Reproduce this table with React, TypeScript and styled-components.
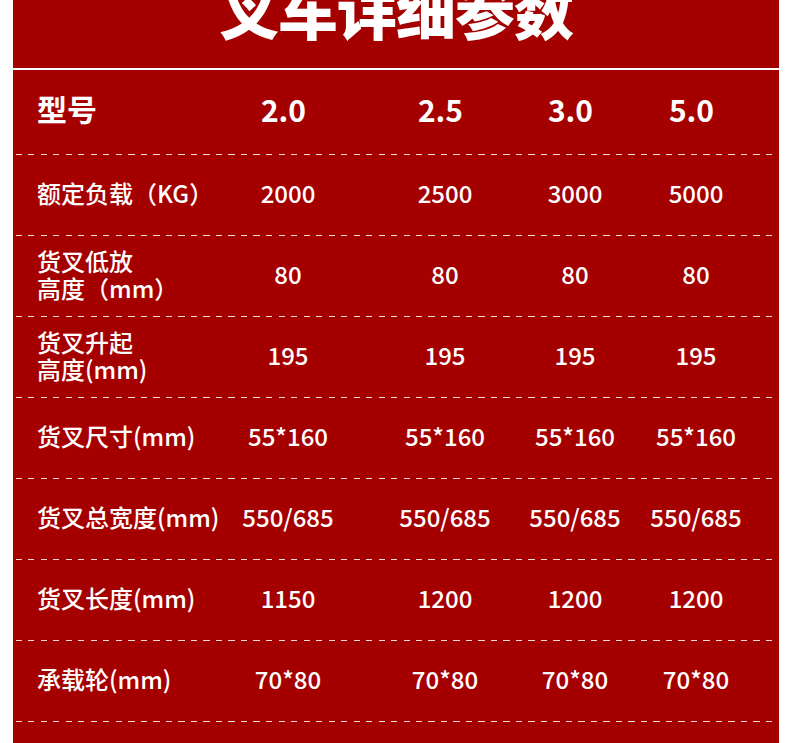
import React, { FC } from 'react';
import styled, { createGlobalStyle } from 'styled-components';

const RED = '#a50000';
const FONT = `"Noto Sans CJK SC", "Noto Sans", sans-serif`;

const GlobalStyle = createGlobalStyle`
  html, body {
    margin: 0;
    padding: 0;
    background: #ffffff;
  }

  body {
    font-family: ${FONT};
    color: #ffffff;
  }
`;

const Panel = styled.section`
  width: 766px;
  height: 743px;
  margin: 0 11px 0 13px;
  background: ${RED};
  overflow: hidden;
`;

const TitleBar = styled.header`
  height: 70px;
  display: flex;
  align-items: flex-end;
  justify-content: center;
  padding-bottom: 29px;
  box-sizing: border-box;
  border-bottom: 2px solid #ffffff;
`;

const Title = styled.h1`
  margin: 0;
  font-size: 60px;
  line-height: 60px;
  font-weight: 900;
  letter-spacing: -1px;
  white-space: nowrap;
`;

const Table = styled.div`
  display: flex;
  flex-direction: column;
`;

const Row = styled.div<{ $head?: boolean }>`
  display: grid;
  grid-template-columns: 173px 156px 158px 102px 140px;
  align-items: center;
  box-sizing: border-box;
  height: ${({ $head }) => ($head ? '84px' : '80px')};
  padding: 0 0 ${({ $head }) => ($head ? '7px' : '5px')} 24px;
  font-size: ${({ $head }) => ($head ? '30px' : '24px')};
  font-weight: ${({ $head }) => ($head ? 700 : 500)};
`;

const Dash = styled.div`
  height: 1px;
  margin: 0 3px;
  background: repeating-linear-gradient(
    to right,
    rgba(255, 255, 255, 0.85) 0 6px,
    transparent 6px 12.5px
  );
`;

const Label = styled.div`
  white-space: nowrap;
  line-height: 27px;
`;

const Value = styled.div<{ $head?: boolean }>`
  text-align: center;
  white-space: nowrap;
  padding-right: ${({ $head }) => ($head ? '9px' : '0')};
`;

interface Spec {
  label: React.ReactNode;
  values: string[];
}

const specs: Spec[] = [
  { label: '额定负载（KG）', values: ['2000', '2500', '3000', '5000'] },
  {
    label: (
      <>
        货叉低放
        <br />
        高度（mm）
      </>
    ),
    values: ['80', '80', '80', '80'],
  },
  {
    label: (
      <>
        货叉升起
        <br />
        高度(mm)
      </>
    ),
    values: ['195', '195', '195', '195'],
  },
  { label: '货叉尺寸(mm)', values: ['55*160', '55*160', '55*160', '55*160'] },
  { label: '货叉总宽度(mm)', values: ['550/685', '550/685', '550/685', '550/685'] },
  { label: '货叉长度(mm)', values: ['1150', '1200', '1200', '1200'] },
  { label: '承载轮(mm)', values: ['70*80', '70*80', '70*80', '70*80'] },
];

const models = ['2.0', '2.5', '3.0', '5.0'];

const App: FC = () => {
  return (
    <>
      <GlobalStyle />
      <Panel>
        <TitleBar>
          <Title>叉车详细参数</Title>
        </TitleBar>
        <Table>
          <Row $head>
            <Label>型号</Label>
            {models.map((m) => (
              <Value $head key={m}>
                {m}
              </Value>
            ))}
          </Row>
          {specs.map((spec, i) => (
            <React.Fragment key={i}>
              <Dash />
              <Row>
                <Label>{spec.label}</Label>
                {spec.values.map((v, j) => (
                  <Value key={j}>{v}</Value>
                ))}
              </Row>
            </React.Fragment>
          ))}
          <Dash />
        </Table>
      </Panel>
    </>
  );
};

export default App;
